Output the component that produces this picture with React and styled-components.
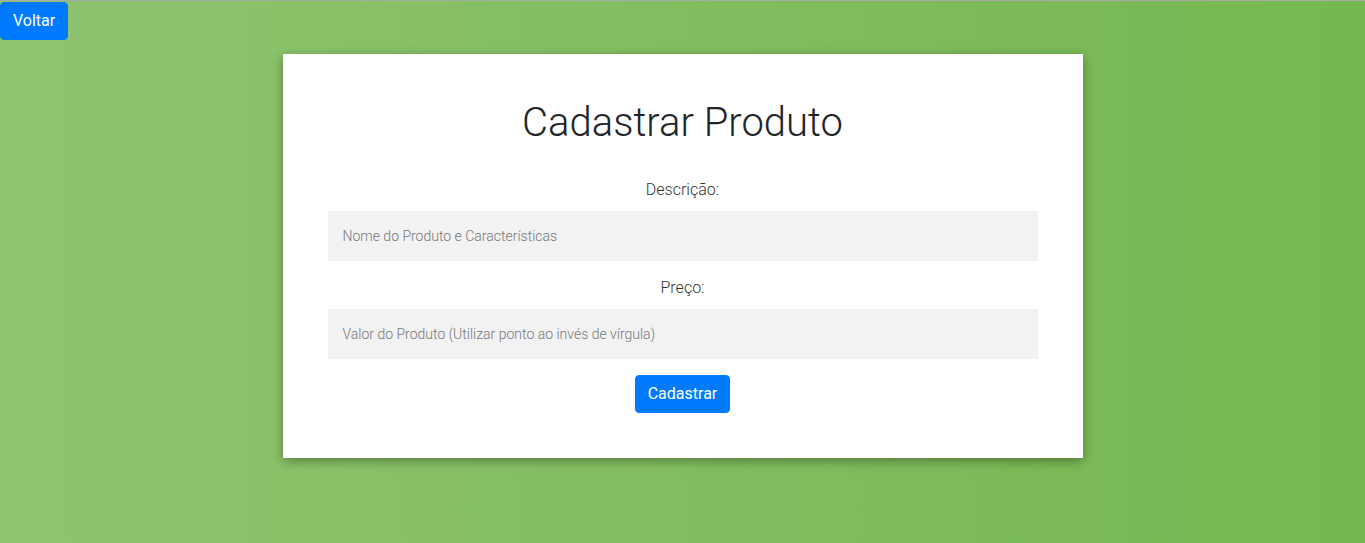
import React from 'react';
import styled, { createGlobalStyle } from 'styled-components';

const GlobalStyle = createGlobalStyle`
  * {
    box-sizing: border-box;
  }

  html, body {
    margin: 0;
    padding: 0;
  }

  body {
    font-family: Roboto, "Liberation Sans", Arial, sans-serif;
    color: #212529;
  }
`;

const Page = styled.div`
  min-height: 100vh;
  border-top: 1px solid #a8aca6;
  background: linear-gradient(to right, #8fc470, #75b750);
  padding-top: 1px;
  padding-bottom: 40px;
`;

const Button = styled.button`
  font-family: Roboto, "Liberation Sans", Arial, sans-serif;
  font-size: 16px;
  font-weight: 400;
  line-height: 24px;
  color: #fff;
  background: #007bff;
  border: 1px solid #007bff;
  border-radius: 4px;
  padding: 6px 12px;
  cursor: pointer;
`;

const BackButton = styled(Button)`
  display: block;
  height: 38px;
`;

const Card = styled.div`
  width: 800px;
  margin: 14px auto 0;
  padding: 45px 45px 45px;
  background: #fff;
  box-shadow: 0 3px 10px rgba(0, 0, 0, 0.35);
  display: flex;
  flex-direction: column;
  align-items: center;
`;

const Title = styled.h1`
  margin: 0 0 31px;
  font-size: 40px;
  line-height: 48px;
  font-weight: 300;
  color: #212529;
`;

const Label = styled.label`
  display: block;
  font-size: 16px;
  line-height: 24px;
  font-weight: 300;
  color: #333;
  margin-bottom: 9px;
`;

const Input = styled.input`
  width: 100%;
  height: 50px;
  border: none;
  outline: none;
  background: #f2f2f2;
  padding: 0 15px;
  font-family: Roboto, "Liberation Sans", Arial, sans-serif;
  font-size: 14px;
  font-weight: 300;
  color: #333;
  margin-bottom: ${(p) => p.$gap}px;

  &::placeholder {
    color: #777;
  }
`;

export default function App() {
  return (
    <>
      <GlobalStyle />
      <Page>
        <BackButton>Voltar</BackButton>
        <Card>
          <Title>Cadastrar Produto</Title>
          <Label>Descrição:</Label>
          <Input $gap={15} placeholder="Nome do Produto e Características" />
          <Label>Preço:</Label>
          <Input $gap={16} placeholder="Valor do Produto (Utilizar ponto ao invés de vírgula)" />
          <Button>Cadastrar</Button>
        </Card>
      </Page>
    </>
  );
}
